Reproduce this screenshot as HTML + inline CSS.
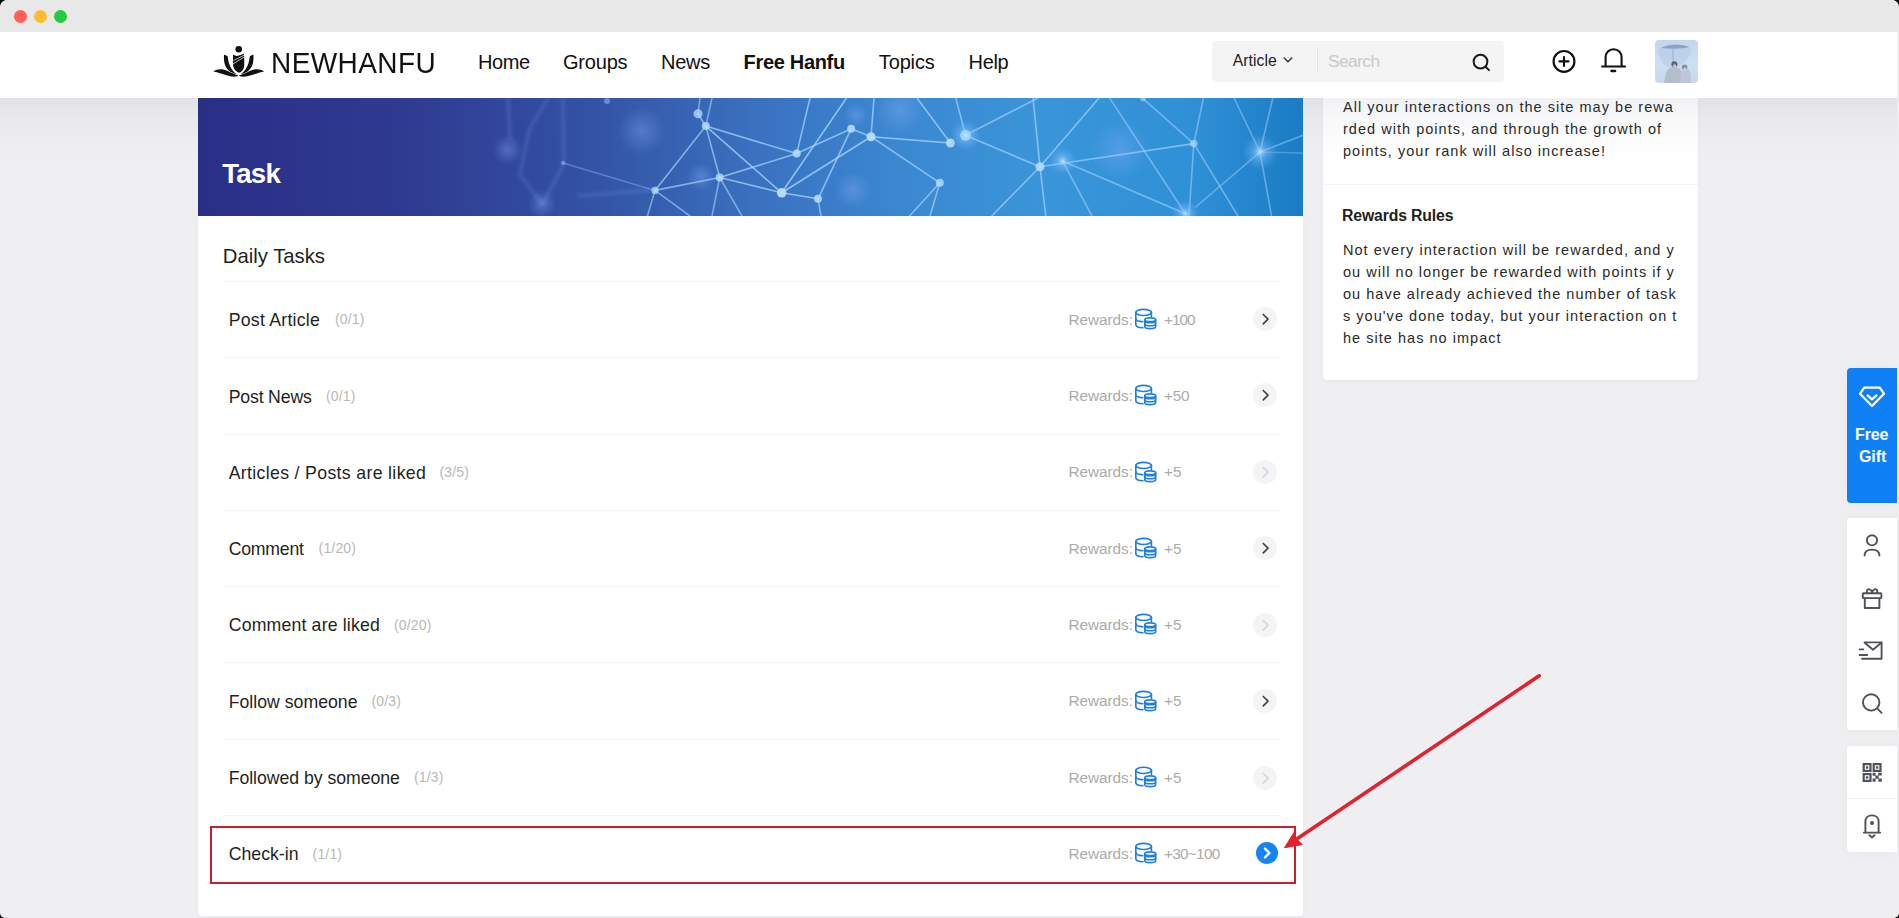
<!DOCTYPE html>
<html><head><meta charset="utf-8">
<style>
*{margin:0;padding:0;box-sizing:border-box}
html,body{width:1899px;height:918px;overflow:hidden}
body{background:#000;font-family:"Liberation Sans",sans-serif;position:relative;color:#222}
#page{position:absolute;left:0;top:0;width:1899px;height:918px;overflow:hidden;background:#efeff1;border-radius:7px 7px 5px 5px}
.a{position:absolute;white-space:nowrap;line-height:1}
#titlebar{position:absolute;left:0;top:0;width:1899px;height:32px;background:#e8e8e8;border-radius:7px 7px 0 0}
.tl{position:absolute;top:10px;width:13px;height:13px;border-radius:50%}
#header{position:absolute;left:0;top:32px;width:1897px;height:66px;background:#fff;z-index:5}
.nav{font-size:20px;color:#111}
#banner{position:absolute;left:198px;top:98px;width:1105px;height:118px;overflow:hidden;
 background:linear-gradient(90deg,#2a2f86 0%,#2e3a90 18%,#3353a5 36%,#3a70bf 50%,#3b87d0 63%,#3a95d9 77%,#2f90d6 90%,#1a7cc4 100%)}
#card{position:absolute;left:198px;top:216px;width:1105px;height:700px;background:#fff;border-radius:0 0 4px 4px;box-shadow:0 1px 4px rgba(0,0,0,0.035)}
.row-t{font-size:17.7px;color:#1f1f1f}
.cnt{font-size:14px;color:#b8b8b8;letter-spacing:0.15px}
.rw{font-size:15.3px;color:#ababab}
.div{position:absolute;left:223px;width:1057px;height:1px;background:#f4f4f4}
#side{position:absolute;left:1323px;top:60px;width:375px;height:320px;background:#fff;border-radius:4px;box-shadow:0 1px 4px rgba(0,0,0,0.035)}
.sp{font-size:14.5px;color:#2a2a2a}
.coin,.chev,.ic{position:absolute;z-index:2}
#tools{position:absolute;left:1847px;width:50px;background:#fff;border-radius:4px 0 0 4px;box-shadow:0 0 12px rgba(0,0,0,0.04)}
</style></head>
<body>
<div id="page">
<div id="titlebar">
  <div class="tl" style="left:13.5px;background:#fe5f57"></div>
  <div class="tl" style="left:33.5px;background:#febc2e"></div>
  <div class="tl" style="left:53.5px;background:#28c840"></div>
</div>

<div id="header">
  <svg class="ic" style="left:208px;top:10px" width="60" height="40" viewBox="0 0 1377 918">
<g fill="#111">
<circle cx="705" cy="165" r="76"/>
<path d="M368 290 C400 295 440 310 452 330 C470 480 500 600 650 740 C520 720 400 620 375 470 C365 400 362 330 368 290 Z"/>
<path d="M1042 290 C1010 295 970 310 958 330 C940 480 910 600 760 740 C890 720 1010 620 1035 470 C1045 400 1048 330 1042 290 Z"/>
<path d="M575 290 C620 300 640 320 660 320 C720 310 790 290 820 262 C835 330 835 450 830 560 C815 640 770 690 712 708 C650 680 600 630 580 560 C572 450 572 350 575 290 Z"/>
<path d="M585 425 L835 300 M565 508 L835 345" stroke="#fff" stroke-width="16" fill="none"/>
<g stroke="#fff" stroke-width="14" paint-order="stroke">
<path d="M122 678 C200 615 330 605 440 660 C550 715 640 748 705 772 C640 805 540 805 420 765 C300 725 200 690 122 678 Z"/>
<path d="M1288 678 C1210 615 1080 605 970 660 C860 715 770 748 705 772 C770 805 870 805 990 765 C1110 725 1210 690 1288 678 Z"/>
</g></g></svg>
<svg class="ic" style="left:1282px;top:24px" width="12" height="8" viewBox="0 0 12 8"><path d="M2.2 2 L6 5.8 L9.8 2" fill="none" stroke="#333" stroke-width="1.4" stroke-linecap="round" stroke-linejoin="round"/></svg>
<svg class="ic" style="left:1470px;top:20px" width="24" height="24" viewBox="0 0 24 24"><circle cx="10.5" cy="9.6" r="6.9" fill="none" stroke="#1a1a1a" stroke-width="2"/><path d="M15.6 14.7 L19 18.1" stroke="#1a1a1a" stroke-width="2" stroke-linecap="round"/></svg>
<svg class="ic" style="left:1550px;top:15px" width="28" height="28" viewBox="0 0 28 28"><circle cx="14" cy="14.4" r="10.4" fill="none" stroke="#111" stroke-width="2.2"/><path d="M9.5 14.4H18.5M14 10V18.9" stroke="#111" stroke-width="2.1" stroke-linecap="round"/></svg>
<svg class="ic" style="left:1599px;top:14px" width="28" height="28" viewBox="0 0 28 28"><path d="M6.6 20.4 V11.4 C6.6 6.6 10 3.2 14.6 3.2 C19.2 3.2 22.6 6.6 22.6 11.4 V20.4" fill="none" stroke="#111" stroke-width="2.1"/><path d="M3.2 20.5 H26" stroke="#111" stroke-width="2.2" stroke-linecap="round"/><path d="M12.4 25 H16.2" stroke="#111" stroke-width="2.3" stroke-linecap="round"/></svg>
<div style="position:absolute;left:1655px;top:8px;width:43px;height:43px;border-radius:4px;overflow:hidden;background:linear-gradient(180deg,#c2d6ef 0%,#cddff3 55%,#c9d8ea 100%)">
<svg width="43" height="43" viewBox="0 0 43 43" style="position:absolute;left:0;top:0">
<defs><filter id="af" x="-20%" y="-20%" width="140%" height="140%"><feGaussianBlur stdDeviation="0.7"/></filter></defs>
<g filter="url(#af)">
<path d="M3 10 C8 3 28 2 36 8 C36 16 30 24 22 27 C12 28 5 26 3 10Z" fill="#b3c8e4" opacity="0.55"/>
<path d="M6 8 C14 4 27 4 34 7 C28 9 14 9 6 8Z" fill="#7f97c2" opacity="0.8"/>
<path d="M18 9 V22" stroke="#8aa0c4" stroke-width="0.7"/>
<path d="M9 43 L11 33 C12 29 15 27 19 27 C23 27 26 29 27 33 L27 43Z" fill="#b4bdcc"/>
<path d="M25 43 L26 33 C27 30 29 29 31 29 C34 29 35 31 35.5 34 L36 43Z" fill="#bcc6d8"/>
<circle cx="19.4" cy="24.2" r="3" fill="#5e6578"/>
<circle cx="29.6" cy="27.2" r="2.8" fill="#8391ab"/>
<circle cx="30" cy="29.2" r="1.6" fill="#d9cfd0"/>
<circle cx="19.6" cy="26" r="1.7" fill="#cfc3c0"/>
</g></svg></div>
<div class="a" style="left:271px;top:18.3px;font-size:28px;letter-spacing:0.43px;color:#111;transform:scaleY(1.045);transform-origin:0 23.7px">NEWHANFU</div>
  <div class="a nav" style="left:478px;top:20.1px;letter-spacing:-0.41px">Home</div>
  <div class="a nav" style="left:563px;top:20.1px;letter-spacing:-0.2px">Groups</div>
  <div class="a nav" style="left:661px;top:20.1px;letter-spacing:-0.27px">News</div>
  <div class="a nav" style="left:743.6px;top:20.1px;letter-spacing:-0.32px;font-weight:700">Free Hanfu</div>
  <div class="a nav" style="left:878.8px;top:20.1px;letter-spacing:-0.14px">Topics</div>
  <div class="a nav" style="left:968.5px;top:20.1px;letter-spacing:-0.3px">Help</div>
  <div style="position:absolute;left:1212px;top:9px;width:292px;height:41px;background:#f4f4f4;border-radius:4px"></div>
  <div class="a" style="left:1232.8px;top:20.7px;font-size:15.7px;color:#222;letter-spacing:0.05px">Article</div>
  <div style="position:absolute;left:1317px;top:16px;width:1px;height:24px;background:#e2e2e2"></div>
  <div class="a" style="left:1327.9px;top:21.2px;font-size:17.4px;letter-spacing:-0.57px;color:#c9c9c9">Search</div>
</div>

<div id="banner">
<svg width="1105" height="118" viewBox="0 0 1105 118" style="position:absolute;left:0;top:0">
<defs><radialGradient id="gl"><stop offset="0" stop-color="#bfe4ff" stop-opacity="0.9"/><stop offset="0.35" stop-color="#8cc8ff" stop-opacity="0.45"/><stop offset="1" stop-color="#6ab0ff" stop-opacity="0"/></radialGradient>
<radialGradient id="bk"><stop offset="0" stop-color="#8fb0ff" stop-opacity="0.35"/><stop offset="1" stop-color="#8fb0ff" stop-opacity="0"/></radialGradient><filter id="bl" x="-5%" y="-5%" width="110%" height="110%"><feGaussianBlur stdDeviation="0.5"/></filter><filter id="bb" x="-50%" y="-50%" width="200%" height="200%"><feGaussianBlur stdDeviation="1.6"/></filter></defs>
<circle cx="309.6" cy="51.7" r="15.0" fill="url(#bk)"/>
<circle cx="344.0" cy="106.0" r="14.0" fill="url(#bk)"/>
<circle cx="443.4" cy="33.0" r="24.0" fill="url(#bk)"/>
<circle cx="503.0" cy="79.0" r="14.0" fill="url(#bk)"/>
<circle cx="654.8" cy="91.6" r="18.0" fill="url(#bk)"/>
<circle cx="658.0" cy="17.0" r="12.0" fill="url(#bk)"/>
<circle cx="702.0" cy="12.0" r="25.0" fill="url(#bk)"/>
<circle cx="922.0" cy="52.0" r="30.0" fill="url(#bk)"/>
<g stroke="#8fb4ff" stroke-width="4" fill="none" stroke-opacity="0.15" filter="url(#bb)">
<polyline points="310.0,0.0 312.0,42.0"/>
<polyline points="365.0,0.0 366.0,66.0"/>
<polyline points="350.0,0.0 331.0,32.0 322.0,77.0 345.0,107.0"/>
<polyline points="366.0,66.0 350.0,96.0 345.0,107.0"/>
<polyline points="379.0,98.0 453.0,92.0"/>
</g>
<g stroke="#a3d2ff" stroke-width="1.6" stroke-linecap="round" filter="url(#bl)">
<line x1="365.0" y1="65.0" x2="457.0" y2="92.4" stroke-opacity="0.35"/>
<line x1="457.0" y1="92.4" x2="507.8" y2="28.1" stroke-opacity="0.70"/>
<line x1="457.0" y1="92.4" x2="521.7" y2="79.5" stroke-opacity="0.70"/>
<line x1="457.0" y1="92.4" x2="449.4" y2="118.0" stroke-opacity="0.60"/>
<line x1="457.0" y1="92.4" x2="492.0" y2="118.0" stroke-opacity="0.60"/>
<line x1="507.8" y1="28.1" x2="521.7" y2="79.5" stroke-opacity="0.70"/>
<line x1="507.8" y1="28.1" x2="598.7" y2="55.6" stroke-opacity="0.75"/>
<line x1="507.8" y1="28.1" x2="583.7" y2="94.8" stroke-opacity="0.80"/>
<line x1="500.0" y1="15.8" x2="502.0" y2="0.0" stroke-opacity="0.60"/>
<line x1="507.8" y1="28.1" x2="514.0" y2="0.0" stroke-opacity="0.60"/>
<line x1="500.0" y1="15.8" x2="507.8" y2="28.1" stroke-opacity="0.70"/>
<line x1="521.7" y1="79.5" x2="598.7" y2="55.6" stroke-opacity="0.75"/>
<line x1="521.7" y1="79.5" x2="583.7" y2="94.8" stroke-opacity="0.75"/>
<line x1="521.7" y1="79.5" x2="514.0" y2="118.0" stroke-opacity="0.60"/>
<line x1="521.7" y1="79.5" x2="544.0" y2="118.0" stroke-opacity="0.60"/>
<line x1="598.7" y1="55.6" x2="612.0" y2="0.0" stroke-opacity="0.75"/>
<line x1="598.7" y1="55.6" x2="653.2" y2="30.8" stroke-opacity="0.75"/>
<line x1="583.7" y1="94.8" x2="648.5" y2="0.0" stroke-opacity="0.80"/>
<line x1="583.7" y1="94.8" x2="673.0" y2="38.7" stroke-opacity="0.80"/>
<line x1="583.7" y1="94.8" x2="620.0" y2="100.8" stroke-opacity="0.80"/>
<line x1="620.0" y1="100.8" x2="653.2" y2="30.8" stroke-opacity="0.75"/>
<line x1="620.0" y1="100.8" x2="623.0" y2="118.0" stroke-opacity="0.70"/>
<line x1="653.2" y1="30.8" x2="673.0" y2="38.7" stroke-opacity="0.75"/>
<line x1="673.0" y1="38.7" x2="676.0" y2="0.0" stroke-opacity="0.75"/>
<line x1="673.0" y1="38.7" x2="752.4" y2="45.0" stroke-opacity="0.80"/>
<line x1="673.0" y1="38.7" x2="741.8" y2="84.8" stroke-opacity="0.75"/>
<line x1="752.4" y1="45.0" x2="719.0" y2="0.0" stroke-opacity="0.75"/>
<line x1="767.5" y1="37.3" x2="757.8" y2="0.0" stroke-opacity="0.70"/>
<line x1="767.5" y1="37.3" x2="840.0" y2="0.0" stroke-opacity="0.65"/>
<line x1="767.5" y1="37.3" x2="842.0" y2="68.8" stroke-opacity="0.70"/>
<line x1="741.8" y1="84.8" x2="711.6" y2="118.0" stroke-opacity="0.70"/>
<line x1="741.8" y1="84.8" x2="732.0" y2="118.0" stroke-opacity="0.70"/>
<line x1="842.0" y1="68.8" x2="835.0" y2="0.0" stroke-opacity="0.70"/>
<line x1="842.0" y1="68.8" x2="901.0" y2="0.0" stroke-opacity="0.70"/>
<line x1="842.0" y1="68.8" x2="995.8" y2="45.6" stroke-opacity="0.65"/>
<line x1="842.0" y1="68.8" x2="847.8" y2="118.0" stroke-opacity="0.70"/>
<line x1="842.0" y1="68.8" x2="793.8" y2="118.0" stroke-opacity="0.70"/>
<line x1="864.5" y1="63.0" x2="987.4" y2="115.7" stroke-opacity="0.60"/>
<line x1="864.5" y1="63.0" x2="894.0" y2="118.0" stroke-opacity="0.55"/>
<line x1="911.6" y1="0.0" x2="987.4" y2="115.7" stroke-opacity="0.55"/>
<line x1="945.0" y1="0.6" x2="995.8" y2="45.6" stroke-opacity="0.55"/>
<line x1="995.8" y1="45.6" x2="1005.4" y2="0.0" stroke-opacity="0.55"/>
<line x1="995.8" y1="45.6" x2="991.0" y2="118.0" stroke-opacity="0.55"/>
<line x1="995.8" y1="45.6" x2="1040.0" y2="118.0" stroke-opacity="0.55"/>
<line x1="1036.0" y1="0.0" x2="1062.0" y2="54.0" stroke-opacity="0.50"/>
<line x1="1074.8" y1="0.0" x2="1062.0" y2="54.0" stroke-opacity="0.50"/>
<line x1="1062.0" y1="54.0" x2="1073.5" y2="118.0" stroke-opacity="0.50"/>
<line x1="1062.0" y1="54.0" x2="1105.0" y2="37.3" stroke-opacity="0.50"/>
<line x1="1062.0" y1="54.0" x2="997.7" y2="109.0" stroke-opacity="0.50"/>
<line x1="1062.0" y1="54.0" x2="1105.0" y2="55.0" stroke-opacity="0.35"/>
</g><g fill="#b7dcff" filter="url(#bl)">
<circle cx="365.0" cy="65.0" r="2.2" fill-opacity="0.35"/>
<circle cx="457.0" cy="92.4" r="3.6" fill-opacity="0.75"/>
<circle cx="500.0" cy="15.8" r="4.5" fill-opacity="0.75"/>
<circle cx="507.8" cy="28.1" r="4.0" fill-opacity="0.80"/>
<circle cx="521.7" cy="79.5" r="4.0" fill-opacity="0.80"/>
<circle cx="409.0" cy="3.0" r="3.0" fill-opacity="0.40"/>
<circle cx="598.7" cy="55.6" r="4.0" fill-opacity="0.85"/>
<circle cx="583.7" cy="94.8" r="4.8" fill-opacity="0.95"/>
<circle cx="620.0" cy="100.8" r="4.0" fill-opacity="0.85"/>
<circle cx="653.2" cy="30.8" r="4.0" fill-opacity="0.85"/>
<circle cx="673.0" cy="38.7" r="4.5" fill-opacity="0.95"/>
<circle cx="752.4" cy="45.0" r="4.5" fill-opacity="0.90"/>
<circle cx="741.8" cy="84.8" r="4.0" fill-opacity="0.80"/>
<circle cx="842.0" cy="68.8" r="4.5" fill-opacity="0.85"/>
<circle cx="995.8" cy="45.6" r="3.8" fill-opacity="0.60"/>
<circle cx="945.0" cy="0.6" r="3.0" fill-opacity="0.50"/>
</g>
<circle cx="767.5" cy="37.3" r="5.5" fill="#b9e0ff" fill-opacity="0.8" filter="url(#bl)"/>
<circle cx="767.5" cy="37.3" r="16.0" fill="url(#gl)"/>
<circle cx="864.5" cy="63.0" r="14.0" fill="url(#gl)"/>
<circle cx="1062.0" cy="54.0" r="18.0" fill="url(#gl)"/>
<circle cx="987.4" cy="115.7" r="14.0" fill="url(#gl)"/>
</svg>
  <div class="a" style="left:24.2px;top:62.2px;font-size:27.6px;font-weight:700;color:#fff;letter-spacing:-0.75px">Task</div>
</div>

<div id="card"></div>
<div class="a" style="left:222.8px;top:245.9px;font-size:20.3px;color:#1f1f1f">Daily Tasks</div>
<div class="div" style="top:281px"></div>

<div class="a row-t" style="left:228.7px;top:312.2px;letter-spacing:0.244px">Post Article</div>
<div class="a cnt" style="left:335.0px;top:312.4px">(0/1)</div>
<div class="a rw" style="left:1068.4px;top:311.8px">Rewards:</div>
<svg class="coin" width="28" height="28" viewBox="0 0 28 28" style="left:1130.0px;top:304.0px"><g fill="none" stroke="#1f7fe0" stroke-width="1.65" stroke-linecap="round"><ellipse cx="13.6" cy="8.4" rx="7.8" ry="3.1"/><path d="M5.8 8.4V20.6C5.8 22.4 9 23.7 12.9 23.8"/><path d="M21.4 8.4V12.6"/><path d="M5.8 14.5C5.8 16.3 8.8 17.5 12.8 17.7"/><ellipse cx="20.2" cy="15.7" rx="5.4" ry="1.8" fill="#fff"/><path d="M14.8 15.7V22.8A5.4 1.8 0 0 0 25.6 22.8V15.7"/><path d="M14.8 16.9A5.4 1.8 0 0 0 25.6 16.9"/><path d="M14.8 19.9A5.4 1.8 0 0 0 25.6 19.9"/></g></svg>
<div class="a rw" style="left:1164.0px;top:311.8px;letter-spacing:-0.95px">+100</div>
<svg class="chev" width="24" height="24" viewBox="0 0 24 24" style="left:1253.2px;top:306.8px"><circle cx="12" cy="12" r="12" fill="#f4f4f6"/><path d="M10.3 7.5L15 12.2L10.3 16.9" fill="none" stroke="#444" stroke-width="1.7" stroke-linecap="round" stroke-linejoin="round"/></svg>
<div class="div" style="top:357.2px"></div>
<div class="a row-t" style="left:228.7px;top:388.5px;letter-spacing:-0.174px">Post News</div>
<div class="a cnt" style="left:326.0px;top:388.7px">(0/1)</div>
<div class="a rw" style="left:1068.4px;top:388.1px">Rewards:</div>
<svg class="coin" width="28" height="28" viewBox="0 0 28 28" style="left:1130.0px;top:380.3px"><g fill="none" stroke="#1f7fe0" stroke-width="1.65" stroke-linecap="round"><ellipse cx="13.6" cy="8.4" rx="7.8" ry="3.1"/><path d="M5.8 8.4V20.6C5.8 22.4 9 23.7 12.9 23.8"/><path d="M21.4 8.4V12.6"/><path d="M5.8 14.5C5.8 16.3 8.8 17.5 12.8 17.7"/><ellipse cx="20.2" cy="15.7" rx="5.4" ry="1.8" fill="#fff"/><path d="M14.8 15.7V22.8A5.4 1.8 0 0 0 25.6 22.8V15.7"/><path d="M14.8 16.9A5.4 1.8 0 0 0 25.6 16.9"/><path d="M14.8 19.9A5.4 1.8 0 0 0 25.6 19.9"/></g></svg>
<div class="a rw" style="left:1164.0px;top:388.1px;letter-spacing:-0.20px">+50</div>
<svg class="chev" width="24" height="24" viewBox="0 0 24 24" style="left:1253.2px;top:383.2px"><circle cx="12" cy="12" r="12" fill="#f4f4f6"/><path d="M10.3 7.5L15 12.2L10.3 16.9" fill="none" stroke="#444" stroke-width="1.7" stroke-linecap="round" stroke-linejoin="round"/></svg>
<div class="div" style="top:433.5px"></div>
<div class="a row-t" style="left:228.7px;top:464.8px;letter-spacing:0.336px">Articles / Posts are liked</div>
<div class="a cnt" style="left:439.5px;top:465.0px">(3/5)</div>
<div class="a rw" style="left:1068.4px;top:464.4px">Rewards:</div>
<svg class="coin" width="28" height="28" viewBox="0 0 28 28" style="left:1130.0px;top:456.6px"><g fill="none" stroke="#1f7fe0" stroke-width="1.65" stroke-linecap="round"><ellipse cx="13.6" cy="8.4" rx="7.8" ry="3.1"/><path d="M5.8 8.4V20.6C5.8 22.4 9 23.7 12.9 23.8"/><path d="M21.4 8.4V12.6"/><path d="M5.8 14.5C5.8 16.3 8.8 17.5 12.8 17.7"/><ellipse cx="20.2" cy="15.7" rx="5.4" ry="1.8" fill="#fff"/><path d="M14.8 15.7V22.8A5.4 1.8 0 0 0 25.6 22.8V15.7"/><path d="M14.8 16.9A5.4 1.8 0 0 0 25.6 16.9"/><path d="M14.8 19.9A5.4 1.8 0 0 0 25.6 19.9"/></g></svg>
<div class="a rw" style="left:1164.0px;top:464.4px;letter-spacing:0.00px">+5</div>
<svg class="chev" width="24" height="24" viewBox="0 0 24 24" style="left:1253.2px;top:459.7px"><circle cx="12" cy="12" r="12" fill="#f4f4f6"/><path d="M10.3 7.5L15 12.2L10.3 16.9" fill="none" stroke="#d6d6d8" stroke-width="1.7" stroke-linecap="round" stroke-linejoin="round"/></svg>
<div class="div" style="top:509.8px"></div>
<div class="a row-t" style="left:228.7px;top:541.1px;letter-spacing:-0.242px">Comment</div>
<div class="a cnt" style="left:318.6px;top:541.3px">(1/20)</div>
<div class="a rw" style="left:1068.4px;top:540.7px">Rewards:</div>
<svg class="coin" width="28" height="28" viewBox="0 0 28 28" style="left:1130.0px;top:532.9px"><g fill="none" stroke="#1f7fe0" stroke-width="1.65" stroke-linecap="round"><ellipse cx="13.6" cy="8.4" rx="7.8" ry="3.1"/><path d="M5.8 8.4V20.6C5.8 22.4 9 23.7 12.9 23.8"/><path d="M21.4 8.4V12.6"/><path d="M5.8 14.5C5.8 16.3 8.8 17.5 12.8 17.7"/><ellipse cx="20.2" cy="15.7" rx="5.4" ry="1.8" fill="#fff"/><path d="M14.8 15.7V22.8A5.4 1.8 0 0 0 25.6 22.8V15.7"/><path d="M14.8 16.9A5.4 1.8 0 0 0 25.6 16.9"/><path d="M14.8 19.9A5.4 1.8 0 0 0 25.6 19.9"/></g></svg>
<div class="a rw" style="left:1164.0px;top:540.7px;letter-spacing:0.00px">+5</div>
<svg class="chev" width="24" height="24" viewBox="0 0 24 24" style="left:1253.2px;top:536.2px"><circle cx="12" cy="12" r="12" fill="#f4f4f6"/><path d="M10.3 7.5L15 12.2L10.3 16.9" fill="none" stroke="#444" stroke-width="1.7" stroke-linecap="round" stroke-linejoin="round"/></svg>
<div class="div" style="top:586.1px"></div>
<div class="a row-t" style="left:228.7px;top:617.4px;letter-spacing:0.169px">Comment are liked</div>
<div class="a cnt" style="left:394.0px;top:617.6px">(0/20)</div>
<div class="a rw" style="left:1068.4px;top:617.0px">Rewards:</div>
<svg class="coin" width="28" height="28" viewBox="0 0 28 28" style="left:1130.0px;top:609.2px"><g fill="none" stroke="#1f7fe0" stroke-width="1.65" stroke-linecap="round"><ellipse cx="13.6" cy="8.4" rx="7.8" ry="3.1"/><path d="M5.8 8.4V20.6C5.8 22.4 9 23.7 12.9 23.8"/><path d="M21.4 8.4V12.6"/><path d="M5.8 14.5C5.8 16.3 8.8 17.5 12.8 17.7"/><ellipse cx="20.2" cy="15.7" rx="5.4" ry="1.8" fill="#fff"/><path d="M14.8 15.7V22.8A5.4 1.8 0 0 0 25.6 22.8V15.7"/><path d="M14.8 16.9A5.4 1.8 0 0 0 25.6 16.9"/><path d="M14.8 19.9A5.4 1.8 0 0 0 25.6 19.9"/></g></svg>
<div class="a rw" style="left:1164.0px;top:617.0px;letter-spacing:0.00px">+5</div>
<svg class="chev" width="24" height="24" viewBox="0 0 24 24" style="left:1253.2px;top:612.6px"><circle cx="12" cy="12" r="12" fill="#f4f4f6"/><path d="M10.3 7.5L15 12.2L10.3 16.9" fill="none" stroke="#d6d6d8" stroke-width="1.7" stroke-linecap="round" stroke-linejoin="round"/></svg>
<div class="div" style="top:662.4px"></div>
<div class="a row-t" style="left:228.7px;top:693.7px;letter-spacing:0.000px">Follow someone</div>
<div class="a cnt" style="left:371.5px;top:693.9px">(0/3)</div>
<div class="a rw" style="left:1068.4px;top:693.3px">Rewards:</div>
<svg class="coin" width="28" height="28" viewBox="0 0 28 28" style="left:1130.0px;top:685.5px"><g fill="none" stroke="#1f7fe0" stroke-width="1.65" stroke-linecap="round"><ellipse cx="13.6" cy="8.4" rx="7.8" ry="3.1"/><path d="M5.8 8.4V20.6C5.8 22.4 9 23.7 12.9 23.8"/><path d="M21.4 8.4V12.6"/><path d="M5.8 14.5C5.8 16.3 8.8 17.5 12.8 17.7"/><ellipse cx="20.2" cy="15.7" rx="5.4" ry="1.8" fill="#fff"/><path d="M14.8 15.7V22.8A5.4 1.8 0 0 0 25.6 22.8V15.7"/><path d="M14.8 16.9A5.4 1.8 0 0 0 25.6 16.9"/><path d="M14.8 19.9A5.4 1.8 0 0 0 25.6 19.9"/></g></svg>
<div class="a rw" style="left:1164.0px;top:693.3px;letter-spacing:0.00px">+5</div>
<svg class="chev" width="24" height="24" viewBox="0 0 24 24" style="left:1253.2px;top:689.0px"><circle cx="12" cy="12" r="12" fill="#f4f4f6"/><path d="M10.3 7.5L15 12.2L10.3 16.9" fill="none" stroke="#444" stroke-width="1.7" stroke-linecap="round" stroke-linejoin="round"/></svg>
<div class="div" style="top:738.7px"></div>
<div class="a row-t" style="left:228.7px;top:770.0px;letter-spacing:-0.050px">Followed by someone</div>
<div class="a cnt" style="left:414.0px;top:770.2px">(1/3)</div>
<div class="a rw" style="left:1068.4px;top:769.6px">Rewards:</div>
<svg class="coin" width="28" height="28" viewBox="0 0 28 28" style="left:1130.0px;top:761.8px"><g fill="none" stroke="#1f7fe0" stroke-width="1.65" stroke-linecap="round"><ellipse cx="13.6" cy="8.4" rx="7.8" ry="3.1"/><path d="M5.8 8.4V20.6C5.8 22.4 9 23.7 12.9 23.8"/><path d="M21.4 8.4V12.6"/><path d="M5.8 14.5C5.8 16.3 8.8 17.5 12.8 17.7"/><ellipse cx="20.2" cy="15.7" rx="5.4" ry="1.8" fill="#fff"/><path d="M14.8 15.7V22.8A5.4 1.8 0 0 0 25.6 22.8V15.7"/><path d="M14.8 16.9A5.4 1.8 0 0 0 25.6 16.9"/><path d="M14.8 19.9A5.4 1.8 0 0 0 25.6 19.9"/></g></svg>
<div class="a rw" style="left:1164.0px;top:769.6px;letter-spacing:0.00px">+5</div>
<svg class="chev" width="24" height="24" viewBox="0 0 24 24" style="left:1253.2px;top:765.5px"><circle cx="12" cy="12" r="12" fill="#f4f4f6"/><path d="M10.3 7.5L15 12.2L10.3 16.9" fill="none" stroke="#d6d6d8" stroke-width="1.7" stroke-linecap="round" stroke-linejoin="round"/></svg>
<div class="div" style="top:815.0px"></div>
<div class="a row-t" style="left:228.7px;top:846.3px;letter-spacing:0.000px">Check-in</div>
<div class="a cnt" style="left:312.6px;top:846.5px">(1/1)</div>
<div class="a rw" style="left:1068.4px;top:845.9px">Rewards:</div>
<svg class="coin" width="28" height="28" viewBox="0 0 28 28" style="left:1130.0px;top:838.1px"><g fill="none" stroke="#1f7fe0" stroke-width="1.65" stroke-linecap="round"><ellipse cx="13.6" cy="8.4" rx="7.8" ry="3.1"/><path d="M5.8 8.4V20.6C5.8 22.4 9 23.7 12.9 23.8"/><path d="M21.4 8.4V12.6"/><path d="M5.8 14.5C5.8 16.3 8.8 17.5 12.8 17.7"/><ellipse cx="20.2" cy="15.7" rx="5.4" ry="1.8" fill="#fff"/><path d="M14.8 15.7V22.8A5.4 1.8 0 0 0 25.6 22.8V15.7"/><path d="M14.8 16.9A5.4 1.8 0 0 0 25.6 16.9"/><path d="M14.8 19.9A5.4 1.8 0 0 0 25.6 19.9"/></g></svg>
<div class="a rw" style="left:1164.0px;top:845.9px;letter-spacing:-0.70px">+30~100</div>
<svg class="chev" width="24" height="24" viewBox="0 0 24 24" style="left:1255.0px;top:841.2px"><circle cx="12" cy="12" r="11" fill="#1684f2"/><path d="M10 7.6L14.4 12L10 16.4" fill="none" stroke="#fff" stroke-width="2.4" stroke-linecap="round" stroke-linejoin="round"/></svg>

<div id="side"></div>
<div class="a sp" style="left:1343px;top:99.8px;letter-spacing:1.03px">All your interactions on the site may be rewa</div>
<div class="a sp" style="left:1343px;top:121.8px;letter-spacing:1.03px">rded with points, and through the growth of</div>
<div class="a sp" style="left:1343px;top:143.8px;letter-spacing:1.03px">points, your rank will also increase!</div>
<div style="position:absolute;left:1323px;top:184px;width:375px;height:1px;background:#f3f3f3"></div>
<div class="a" style="left:1342px;top:207.8px;font-size:15.8px;font-weight:700;letter-spacing:-0.15px;color:#222">Rewards Rules</div>
<div class="a sp" style="left:1343px;top:243.2px;letter-spacing:1.03px">Not every interaction will be rewarded, and y</div>
<div class="a sp" style="left:1343px;top:265.2px;letter-spacing:1.03px">ou will no longer be rewarded with points if y</div>
<div class="a sp" style="left:1343px;top:287.2px;letter-spacing:1.03px">ou have already achieved the number of task</div>
<div class="a sp" style="left:1343px;top:309.2px;letter-spacing:1.03px">s you've done today, but your interaction on t</div>
<div class="a sp" style="left:1343px;top:331.2px;letter-spacing:1.03px">he site has no impact</div>


<div id="tools" style="top:368px;height:135px;background:#0f80f5"></div>
<div class="a" style="left:1855px;top:427px;font-size:16px;font-weight:700;color:#fff;letter-spacing:-0.1px">Free</div>
<div class="a" style="left:1859px;top:448.8px;font-size:16px;font-weight:700;color:#fff;letter-spacing:-0.1px">Gift</div>
<div id="tools" style="top:518px;height:212px"></div>
<div id="tools" style="top:746px;height:106px"></div>
<div style="position:absolute;left:1847px;top:798px;width:50px;height:1px;background:#f0f0f0"></div>
<div style="position:absolute;left:210px;top:826px;width:1086px;height:58px;border:2px solid #cd1f2b"></div>
<svg class="ic" style="left:1847px;top:368px;z-index:6" width="50" height="484" viewBox="1847 368 50 484">
<g fill="none" stroke="#fff" stroke-width="2.3" stroke-linejoin="round" stroke-linecap="round">
<path d="M1864.2 387.6 H1879.8 L1884 393.8 L1872 406 L1860 393.8 Z"/>
<path d="M1867.6 395.4 L1872 399.4 L1876.4 395.4"/>
</g>
<g fill="none" stroke="#4f525a" stroke-width="1.9" stroke-linecap="round" stroke-linejoin="round">
<circle cx="1872" cy="540.3" r="5.1"/>
<path d="M1864.6 555.6 C1864.6 551.8 1867.6 549.6 1872 549.6 C1876.4 549.6 1879.4 551.8 1879.4 555.6"/>
<rect x="1862.8" y="593.3" width="18.6" height="4.8" rx="0.6"/>
<path d="M1864.8 598.1 V608 H1879.4 V598.1"/>
<path d="M1867 593.3 V590.8 C1867 588.5 1871.6 588.5 1872.1 592.8 C1872.6 588.5 1877.2 588.5 1877.2 590.8 V593.3"/>
<path d="M1864.6 642.4 H1881.6 V658.8 H1862"/>
<path d="M1864.8 642.8 L1873 649.8 L1881.2 642.8"/>
<path d="M1859.6 649.4 H1863.2 M1859.6 655 H1867.2"/>
<circle cx="1871.2" cy="702.4" r="8.2"/>
<path d="M1877.2 708.4 L1881.6 712.8"/>
<path d="M1865.4 832.4 V821.5 C1865.4 817.8 1868.3 815.4 1872 815.4 C1875.7 815.4 1878.6 817.8 1878.6 821.5 V832.4"/>
<path d="M1863.8 832.6 H1880.2"/>
<path d="M1869.4 835.2 L1872 837.4 L1874.6 835.2"/>
</g>
<circle cx="1872" cy="823" r="2" fill="#4f525a"/>
<g fill="none" stroke="#4f525a" stroke-width="2.2">
<rect x="1863.7" y="764.1" width="6.8" height="6.8"/><rect x="1873.7" y="764.1" width="6.8" height="6.8"/><rect x="1863.7" y="774.1" width="6.8" height="6.8"/>
</g>
<g fill="#4f525a">
<rect x="1865.9" y="766.3" width="2.4" height="2.4"/><rect x="1875.9" y="766.3" width="2.4" height="2.4"/><rect x="1865.9" y="776.3" width="2.4" height="2.4"/>
<path d="M1872.6 772.8 H1875.6 V775.8 H1872.6 Z M1878.2 772.8 H1881.8 V775.4 H1878.2 Z M1875.4 775.6 H1878.6 V778.8 H1875.4 Z M1872.6 778.6 H1875.6 V781.8 H1872.6 Z M1878.4 778.4 H1881.8 V781.8 H1878.4 Z"/>
</g>
</svg>
<svg class="ic" style="left:1270px;top:660px;z-index:7" width="290" height="200" viewBox="1270 660 290 200">
<line x1="1539.2" y1="675.8" x2="1296" y2="839.5" stroke="#e1222e" stroke-width="3.6" stroke-linecap="round"/>
<path d="M1284.5 847.7 L1294.2 832.2 L1296.4 838.8 L1302.4 844.6 Z" fill="#e1222e" stroke="#e1222e" stroke-width="1" stroke-linejoin="round"/>
</svg>
<div style="position:absolute;left:0;top:98px;width:198px;height:60px;z-index:4;pointer-events:none;background:linear-gradient(180deg,rgba(40,50,90,0.065) 0%,rgba(40,50,90,0.03) 35%,rgba(40,50,90,0) 100%)"></div>
<div style="position:absolute;left:1303px;top:98px;width:594px;height:60px;z-index:4;pointer-events:none;background:linear-gradient(180deg,rgba(40,50,90,0.065) 0%,rgba(40,50,90,0.03) 35%,rgba(40,50,90,0) 100%)"></div>
</div>
</body></html>
